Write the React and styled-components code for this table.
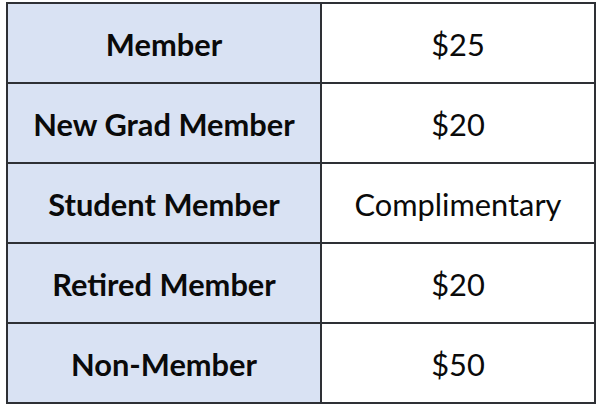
import React from 'react'
import styled, { createGlobalStyle } from 'styled-components'

const GlobalStyle = createGlobalStyle`
  body {
    margin: 0;
    background: #fff;
    font-family: Lato, 'Liberation Sans', sans-serif;
  }
`

const Table = styled.div`
  display: grid;
  grid-template-columns: 312px 272px;
  grid-template-rows: repeat(5, 78px);
  gap: 2px;
  padding: 2px;
  margin: 2px 0 0 6px;
  width: 590px;
  box-sizing: border-box;
  background: #2e3035;
`

const Cell = styled.div`
  display: flex;
  align-items: center;
  justify-content: center;
  padding-top: 3px;
  box-sizing: border-box;
  background: ${({ $head }) => ($head ? '#d9e2f3' : '#ffffff')};
  color: #0a0a0a;
  font-size: 30.8px;
  font-weight: ${({ $head }) => ($head ? 700 : 400)};
  white-space: nowrap;
`

const rates = [
  { type: 'Member', price: '$25' },
  { type: 'New Grad Member', price: '$20' },
  { type: 'Student Member', price: 'Complimentary' },
  { type: 'Retired Member', price: '$20' },
  { type: 'Non-Member', price: '$50' },
]

export default function App() {
  return (
    <>
      <GlobalStyle />
      <Table>
        {rates.map(r => (
          <React.Fragment key={r.type}>
            <Cell $head>{r.type}</Cell>
            <Cell>{r.price}</Cell>
          </React.Fragment>
        ))}
      </Table>
    </>
  )
}
